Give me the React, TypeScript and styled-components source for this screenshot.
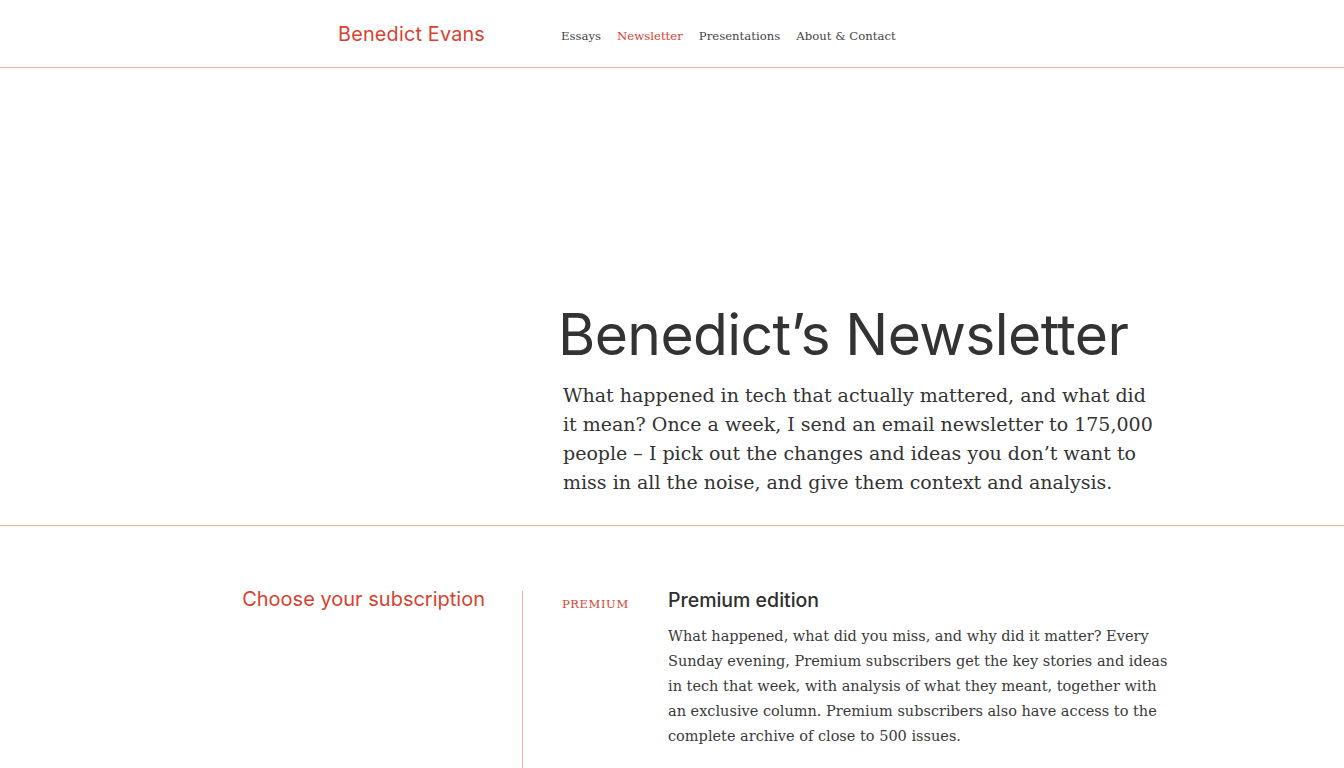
import React from "react";
import styled, { createGlobalStyle } from "styled-components";

const red = "#d8412f";
const line = "#f2ada3";
const ink = "#363636";
const sans = `Inter, "Liberation Sans", sans-serif`;
const serif = `"DejaVu Serif", "Liberation Serif", serif`;

const Global = createGlobalStyle`
  body {
    margin: 0;
    background: #fff;
    color: ${ink};
    overflow: hidden;
  }
`;

const Header = styled.header`
  display: grid;
  grid-template-columns: 280px 1fr;
  padding-left: 242px;
  height: 68px;
  border-bottom: 1px solid ${line};
  align-items: center;
  box-sizing: border-box;
`;

const Logo = styled.a`
  font-family: ${sans};
  font-size: 19.8px;
  letter-spacing: 0.2px;
  color: ${red};
  text-align: right;
  padding-right: 37px;
  padding-top: 1px;
  text-decoration: none;
`;

const Nav = styled.nav`
  display: flex;
  gap: 16px;
  padding-left: 39px;
  padding-top: 5px;
`;

const NavLink = styled.a<{ $active?: boolean }>`
  font-family: ${serif};
  font-size: 11.7px;
  color: ${(p) => (p.$active ? red : "#444")};
  text-decoration: none;
`;

const Hero = styled.section`
  display: grid;
  grid-template-columns: 280px 1fr;
  padding-left: 242px;
  padding-top: 232px;
  padding-bottom: 28px;
  border-bottom: 1px solid ${line};
`;

const HeroBody = styled.div`
  grid-column: 2;
  padding-left: 39px;
`;

const Title = styled.h1`
  font-family: ${sans};
  font-weight: 400;
  font-size: 57px;
  letter-spacing: -0.6px;
  line-height: 70px;
  margin: 0 0 11px -3px;
  color: #333;
`;

const Lead = styled.p`
  font-family: ${serif};
  font-size: 19px;
  line-height: 29px;
  width: 598px;
  margin: 0 0 0 2px;
  color: #333;
`;

const Plans = styled.section`
  display: grid;
  grid-template-columns: 281px 1fr;
  padding-left: 242px;
  padding-top: 65px;
`;

const PlansHead = styled.h2`
  font-family: ${sans};
  font-weight: 400;
  font-size: 20px;
  color: ${red};
  text-align: right;
  padding-right: 37px;
  margin: 0;
  line-height: 17px;
  border-right: 1px solid ${line};
  height: 200px;
  box-sizing: border-box;
`;

const Plan = styled.div`
  display: grid;
  grid-template-columns: 106px 500px;
  padding-left: 39px;
`;

const Tag = styled.div`
  font-family: ${serif};
  font-size: 11.5px;
  letter-spacing: 0.6px;
  color: ${red};
  padding-top: 6px;
`;

const PlanTitle = styled.h3`
  font-family: ${sans};
  font-weight: 500;
  font-size: 19.5px;
  line-height: 18px;
  margin: 0 0 15px 0;
  color: #2e2e2e;
`;

const PlanText = styled.p`
  font-family: ${serif};
  font-size: 14.5px;
  line-height: 25px;
  margin: 0;
  color: #3a3a3a;
`;

export default function App() {
  return (
    <>
      <Global />
      <Header>
        <Logo>Benedict Evans</Logo>
        <Nav>
          <NavLink>Essays</NavLink>
          <NavLink $active>Newsletter</NavLink>
          <NavLink>Presentations</NavLink>
          <NavLink>About &amp; Contact</NavLink>
        </Nav>
      </Header>
      <Hero>
        <HeroBody>
          <Title>Benedict’s Newsletter</Title>
          <Lead>
            What happened in tech that actually mattered, and what did it mean? Once a week, I send an email
            newsletter to 175,000 people – I pick out the changes and ideas you don’t want to miss in all the
            noise, and give them context and analysis.
          </Lead>
        </HeroBody>
      </Hero>
      <Plans>
        <PlansHead>Choose your subscription</PlansHead>
        <Plan>
          <Tag>PREMIUM</Tag>
          <div>
            <PlanTitle>Premium edition</PlanTitle>
            <PlanText>
              What happened, what did you miss, and why did it matter? Every Sunday evening, Premium subscribers
              get the key stories and ideas in tech that week, with analysis of what they meant, together with an
              exclusive column. Premium subscribers also have access to the complete archive of close to 500
              issues.
            </PlanText>
          </div>
        </Plan>
      </Plans>
    </>
  );
}
